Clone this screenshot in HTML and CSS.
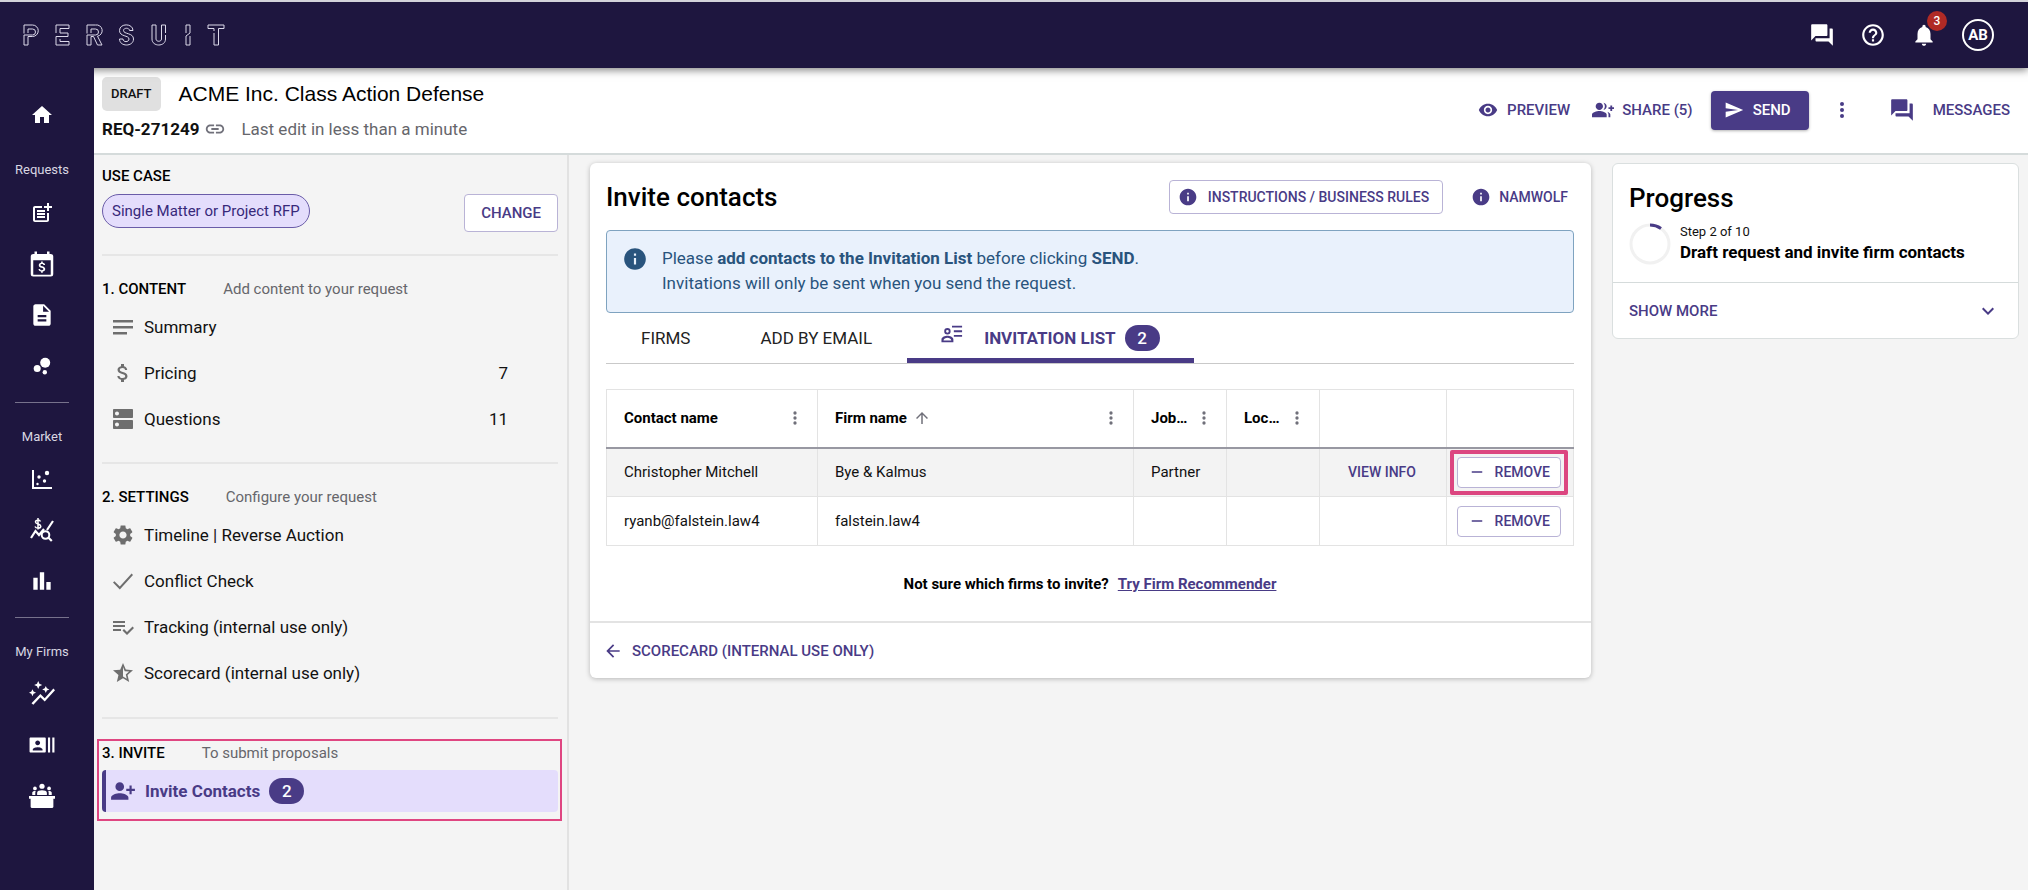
FILE: index.html
```html
<!DOCTYPE html>
<html lang="en">
<head>
<meta charset="utf-8">
<title>ACME Inc. Class Action Defense</title>
<link rel="stylesheet" href="styles.css">
</head>
<body>
<svg class="sprite" aria-hidden="true">
  <symbol id="i-forum" viewBox="0 0 24 24"><path d="M21 6h-2v9H6v2c0 .55.45 1 1 1h11l4 4V7c0-.55-.45-1-1-1zm-4 6V3c0-.55-.45-1-1-1H3c-.55 0-1 .45-1 1v14l4-4h10c.55 0 1-.45 1-1z"/></symbol>
  <symbol id="i-help" viewBox="0 0 24 24"><path d="M11 18h2v-2h-2v2zm1-16C6.48 2 2 6.48 2 12s4.480 10 10 10 10-4.480 10-10S17.520 2 12 2zm0 18c-4.410 0-8-3.590-8-8s3.590-8 8-8 8 3.590 8 8-3.590 8-8 8zm0-14c-2.210 0-4 1.790-4 4h2c0-1.100.9-2 2-2s2 .9 2 2c0 2-3 1.750-3 5h2c0-2.250 3-2.500 3-5 0-2.210-1.790-4-4-4z"/></symbol>
  <symbol id="i-bell" viewBox="0 0 24 24"><path d="M12 22c1.100 0 2-.9 2-2h-4c0 1.100.89 2 2 2zm6-6v-5c0-3.070-1.640-5.640-4.500-6.320V4c0-.83-.67-1.500-1.500-1.500s-1.500.67-1.500 1.500v.68C7.630 5.360 6 7.920 6 11v5l-2 2v1h16v-1l-2-2z"/></symbol>
  <symbol id="i-home" viewBox="0 0 24 24"><path d="M10 20v-6h4v6h5v-8h3L12 3 2 12h3v8z"/></symbol>
  <symbol id="i-post" viewBox="0 0 24 24"><path d="M17 19.220H5V7h7V5H5c-1.100 0-2 .9-2 2v12c0 1.100.9 2 2 2h12c1.100 0 2-.9 2-2v-7h-2v7.220z"/><path d="M19 2h-2v3h-3v2h3v3h2V7h3V5h-3V2zM7 9h8v2H7zM7 12v2h8v-2zM7 15h8v2H7z"/></symbol>
  <symbol id="i-calendar" viewBox="0 0 24 24"><path d="M19 4h-1V2h-2v2H8V2H6v2H5a2 2 0 0 0-2 2v14a2 2 0 0 0 2 2h14a2 2 0 0 0 2-2V6a2 2 0 0 0-2-2zm0 16.500H5V9h14v11.500z"/><path d="M12.600 11v-1h-1.300v1c-1 .2-1.900.8-1.900 1.900 0 1.200 1 1.700 2.200 2 1.100.3 1.500.6 1.500 1.100 0 .4-.3.9-1.300.9s-1.300-.4-1.300-1H9.200c.1 1.200.9 1.900 2.100 2.100v1h1.300v-1c1.100-.2 2-.8 2-2 0-1.500-1.300-2-2.400-2.300-1.100-.3-1.400-.5-1.400-1s.4-.8 1.200-.8 1.100.4 1.100.9h1.400c0-1-.7-1.600-1.900-1.800z"/></symbol>
  <symbol id="i-doc" viewBox="0 0 24 24"><path d="M14 2H6c-1.100 0-2 .9-2 2v16c0 1.100.89 2 2 2h12c1.100 0 2-.9 2-2V8l-6-6zm2 16H8v-2h8v2zm0-4H8v-2h8v2zm-3-5V3.500L18.500 9H13z"/></symbol>
  <symbol id="i-bubble" viewBox="0 0 24 24"><circle cx="7.200" cy="14.400" r="3.500"/><circle cx="14.800" cy="18.300" r="2.200"/><circle cx="15.200" cy="8.800" r="5"/></symbol>
  <symbol id="i-scatter" viewBox="0 0 24 24"><path d="M2 3h2v17h18v2H2z"/><circle cx="9" cy="10" r="1.700"/><circle cx="17" cy="6" r="2.200"/><circle cx="14.500" cy="14" r="1.700"/><circle cx="7.500" cy="17" r="1.200"/></symbol>
  <symbol id="i-query" viewBox="0 0 24 24"><path fill="none" stroke="currentColor" stroke-width="2.200" d="M1 20l4.500-7 3.500 4 5-6M17 12l6-9"/><circle cx="15.500" cy="17" r="3.800" fill="none" stroke="currentColor" stroke-width="2"/><path fill="none" stroke="currentColor" stroke-width="2.200" d="M18.300 19.500l3.500 3.500"/><path fill="none" stroke="currentColor" stroke-width="1.500" d="M10.500 3.500C9.500 1.500 5.500 1.700 5.500 4S10.800 5.800 10.800 8.200 6 10.800 5 8.500M8 0v11.500"/></symbol>
  <symbol id="i-bars" viewBox="0 0 24 24"><path d="M4 9h4v11H4zM16 13h4v7h-4zM10 4h4v16h-4z"/></symbol>
  <symbol id="i-insights" viewBox="0 0 24 24"><path d="M22.500 7L24 8.500l-9.500 10.500-4-4L4 22l-1.700-1.500 8.200-8.500 4 4z"/><path d="M8.500 0l1.100 2.600 2.600 1.100-2.600 1.100-1.100 2.600-1.100-2.600-2.600-1.100 2.600-1.100zM3.200 7.500l1 2.300 2.300 1-2.300 1-1 2.300-1-2.300-2.300-1 2.300-1zM15.500 4.500l1 2.300 2.300 1-2.300 1-1 2.300-1-2.300-2.300-1 2.300-1z"/></symbol>
  <symbol id="i-contacts" viewBox="0 0 24 24"><path d="M21.500 5v14h2V5h-2zm-4 14h2V5h-2v14zM14.500 5H1.500c-.55 0-1 .45-1 1v12c0 .55.45 1 1 1h13c.55 0 1-.45 1-1V6c0-.55-.45-1-1-1zM8 7.750c1.240 0 2.250 1.010 2.250 2.250S9.240 12.250 8 12.250 5.750 11.240 5.750 10 6.760 7.750 8 7.750zM12.500 17h-9v-.75c0-1.500 3-2.250 4.500-2.250s4.500.75 4.500 2.250V17z"/></symbol>
  <symbol id="i-panel" viewBox="0 0 24 24"><circle cx="12" cy="3" r="2.400"/><circle cx="5.500" cy="5" r="1.700"/><circle cx="18.500" cy="5" r="1.700"/><path d="M7.500 11V9c0-3 9-3 9 0v2zM3 11V9c0-1.200 1.500-1.800 3.300-1.600C5.800 8 5.800 9 5.800 11zM21 11V9c0-1.200-1.500-1.800-3.300-1.600.5.600.5 1.600.5 3.600zM0 12h24v2.500h-1.500V22a1 1 0 0 1-1 1h-19a1 1 0 0 1-1-1v-7.500H0z"/></symbol>
  <symbol id="i-link" viewBox="0 0 24 24"><path d="M3.900 12c0-1.710 1.390-3.100 3.100-3.100h4V7H7c-2.760 0-5 2.240-5 5s2.240 5 5 5h4v-1.900H7c-1.710 0-3.100-1.390-3.100-3.100zM8 13h8v-2H8v2zm9-6h-4v1.900h4c1.710 0 3.100 1.390 3.100 3.100s-1.390 3.100-3.100 3.100h-4V17h4c2.760 0 5-2.240 5-5s-2.240-5-5-5z"/></symbol>
  <symbol id="i-eye" viewBox="0 0 24 24"><path d="M12 4.500C7 4.500 2.730 7.610 1 12c1.730 4.390 6 7.500 11 7.500s9.270-3.110 11-7.500c-1.730-4.390-6-7.500-11-7.500zM12 17c-2.760 0-5-2.240-5-5s2.240-5 5-5 5 2.240 5 5-2.240 5-5 5zm0-8c-1.660 0-3 1.340-3 3s1.340 3 3 3 3-1.340 3-3-1.340-3-3-3z"/></symbol>
  <symbol id="i-share" viewBox="0 0 24 24"><path d="M22 9V7h-2v2h-2v2h2v2h2v-2h2V9zM8 12c2.210 0 4-1.790 4-4s-1.790-4-4-4-4 1.790-4 4 1.790 4 4 4zm0 1c-2.670 0-8 1.340-8 4v3h16v-3c0-2.660-5.330-4-8-4zm4.510-8.950C13.430 5.110 14 6.490 14 8s-.57 2.890-1.490 3.950C14.470 11.700 16 10.040 16 8s-1.530-3.700-3.490-3.950zm4.020 9.780C17.420 14.660 18 15.700 18 17v3h2v-3c0-1.450-1.590-2.510-3.470-3.170z"/></symbol>
  <symbol id="i-send" viewBox="0 0 24 24"><path d="M2.010 21L23 12 2.010 3 2 10l15 2-15 2z"/></symbol>
  <symbol id="i-dots" viewBox="0 0 24 24"><circle cx="12" cy="6" r="2"/><circle cx="12" cy="12" r="2"/><circle cx="12" cy="18" r="2"/></symbol>
  <symbol id="i-lines" viewBox="0 0 24 24"><path d="M2 5h20v2.500H2zM2 11h20v2.500H2zM2 17h14v2.500H2z"/></symbol>
  <symbol id="i-dollar" viewBox="0 0 24 24"><path d="M11.800 10.900c-2.270-.59-3-1.200-3-2.150 0-1.090 1.010-1.850 2.700-1.850 1.780 0 2.440.85 2.500 2.100h2.210c-.07-1.720-1.120-3.300-3.210-3.810V3h-3v2.160c-1.940.42-3.500 1.680-3.500 3.610 0 2.310 1.910 3.460 4.700 4.130 2.500.6 3 1.480 3 2.410 0 .69-.49 1.790-2.700 1.790-2.060 0-2.870-.92-2.980-2.100h-2.200c.12 2.190 1.760 3.420 3.680 3.830V21h3v-2.150c1.950-.37 3.500-1.500 3.500-3.550 0-2.840-2.430-3.810-4.700-4.400z"/></symbol>
  <symbol id="i-dns" viewBox="0 0 24 24"><path d="M21 13H3c-.55 0-1 .45-1 1v7c0 .55.45 1 1 1h18c.55 0 1-.45 1-1v-7c0-.55-.45-1-1-1zM6 19.500c-1.100 0-2-.9-2-2s.9-2 2-2 2 .9 2 2-.9 2-2 2zM21 2H3c-.55 0-1 .45-1 1v7c0 .55.45 1 1 1h18c.55 0 1-.45 1-1V3c0-.55-.45-1-1-1zM6 8.500c-1.100 0-2-.9-2-2s.9-2 2-2 2 .9 2 2-.9 2-2 2z"/></symbol>
  <symbol id="i-gear" viewBox="0 0 24 24"><path d="M19.140 12.940c.04-.3.060-.61.060-.94 0-.32-.02-.64-.07-.94l2.030-1.580c.18-.14.23-.41.12-.61l-1.920-3.320c-.12-.22-.37-.29-.59-.22l-2.390.96c-.5-.38-1.030-.7-1.620-.94l-.36-2.540c-.04-.24-.24-.41-.48-.41h-3.840c-.24 0-.43.17-.47.41l-.36 2.540c-.59.24-1.130.57-1.620.94l-2.390-.96c-.22-.08-.47 0-.59.22L2.740 8.870c-.12.21-.08.47.12.61l2.030 1.580c-.05.3-.09.63-.09.94s.02.64.07.94l-2.030 1.580c-.18.14-.23.41-.12.61l1.920 3.320c.12.22.37.29.59.22l2.390-.96c.5.38 1.030.7 1.620.94l.36 2.540c.05.24.24.41.48.41h3.840c.24 0 .44-.17.47-.41l.36-2.540c.59-.24 1.130-.56 1.620-.94l2.390.96c.22.08.47 0 .59-.22l1.920-3.320c.12-.22.07-.47-.12-.61l-2.010-1.580zM12 15.600c-1.980 0-3.600-1.620-3.600-3.600s1.620-3.600 3.600-3.600 3.600 1.620 3.600 3.600-1.620 3.600-3.600 3.600z"/></symbol>
  <symbol id="i-check" viewBox="0 0 24 24"><path d="M8.800 17.600L3.400 12.200 2 13.600 8.800 20.400 22 6l-1.400-1.400z"/></symbol>
  <symbol id="i-track" viewBox="0 0 24 24"><path d="M14 10H2v2h12v-2zm0-4H2v2h12V6zM2 16h8v-2H2v2zm19.500-4.500L23 13l-6.990 7-4.510-4.500L13 14l3.010 3 5.490-5.500z"/></symbol>
  <symbol id="i-star" viewBox="0 0 24 24"><path d="M22 9.240l-7.190-.62L12 2 9.190 8.630 2 9.240l5.460 4.730L5.820 21 12 17.270 18.180 21l-1.630-7.030L22 9.240zM12 15.400V6.100l1.710 4.040 4.380.38-3.320 2.880 1 4.280L12 15.400z"/></symbol>
  <symbol id="i-invite" viewBox="0 0 24 24"><path d="M13 8c0-2.210-1.790-4-4-4S5 5.790 5 8s1.790 4 4 4 4-1.790 4-4zm2 2v2h3v3h2v-3h3v-2h-3V7h-2v3h-3zM1 18v2h16v-2c0-2.660-5.330-4-8-4s-8 1.340-8 4z"/></symbol>
  <symbol id="i-info" viewBox="0 0 24 24"><path d="M12 2C6.480 2 2 6.480 2 12s4.480 10 10 10 10-4.480 10-10S17.520 2 12 2zm1 15h-2v-6h2v6zm0-8h-2V7h2v2z"/></symbol>
  <symbol id="i-list" viewBox="0 0 24 24"><path d="M12 3h11v2H12zM14 8h9v2h-9zM14 13h9v2h-9z"/><path d="M7 5.500a3.500 3.500 0 1 0 0 7 3.500 3.500 0 0 0 0-7zm0 2a1.500 1.500 0 1 1 0 3 1.500 1.500 0 0 1 0-3zM7 14c-2.300 0-6.500 1.200-6.500 4v3h13v-3c0-2.800-4.200-4-6.500-4zm4.300 5H2.700c.3-1.600 2.300-2.800 4.300-2.800s4 1.200 4.300 2.800z"/></symbol>
  <symbol id="i-up" viewBox="0 0 24 24"><path d="M4 12l1.410 1.410L11 7.830V20h2V7.830l5.580 5.590L20 12l-8-8z"/></symbol>
  <symbol id="i-left" viewBox="0 0 24 24"><path d="M20 11H7.830l5.590-5.590L12 4l-8 8 8 8 1.410-1.410L7.830 13H20z"/></symbol>
  <symbol id="i-minus" viewBox="0 0 24 24"><path d="M5 11h14v2H5z"/></symbol>
  <symbol id="i-chevron" viewBox="0 0 24 24"><path d="M16.590 8.590L12 13.170 7.410 8.590 6 10l6 6 6-6z"/></symbol>
</svg>

<header class="topbar">
  <svg class="logo" viewBox="0 0 206 22" role="img" aria-label="PERSUIT">
    <path d="M1 9.500V1h8.500a5.500 5.500 0 0 1 0 11.500H5V21H1V11h8.500a3 3 0 0 0 0-6H5v4"/>
    <path d="M33 9V1h13v3.500H37V9h8v3.500H33V21h13v-3.500h-9V15"/>
    <path d="M64 9.500V1h8.500a5.500 5.500 0 0 1 2 11.200L79 21h-4.500l-4-8.500H68V21h-4V11h8.500a3 3 0 0 0 0-6H68v4"/>
    <path d="M110 6.500c0-7.500-13.500-7.500-13.500 0 0 6.500 9.500 4.500 9.500 8.500 0 3.500-6 3.500-6 0h-3.500c0 8 14 8 14 0 0-6.500-10-4.500-10-8.500 0-3 6-3 6 0z"/>
    <path d="M142.500 9V1h-4v14c0 3-5.500 3-5.500 0V1h-4v14c0 8 13.500 8 13.500 0v-4"/>
    <path d="M163 9V1h4v8l-4 3v9h4v-9"/>
    <path d="M191 7V4.500h-6V1h16v3.500h-5.500V21H191V9"/>
  </svg>
  <nav class="top-icons" aria-label="Account">
    <button class="icon-btn" aria-label="Messages"><svg class="i26"><use href="#i-forum"/></svg></button>
    <button class="icon-btn" aria-label="Help"><svg class="i26"><use href="#i-help"/></svg></button>
    <button class="icon-btn" aria-label="Notifications"><svg class="i26"><use href="#i-bell"/></svg><span class="count">3</span></button>
    <button class="avatar">AB</button>
  </nav>
</header>

<div class="shell">
  <nav class="rail" aria-label="Main">
    <a href="#" aria-label="Home"><svg class="i24"><use href="#i-home"/></svg></a>
    <span class="rail-label">Requests</span>
    <a href="#" aria-label="New request"><svg class="i24"><use href="#i-post"/></svg></a>
    <a href="#" aria-label="Rates"><svg class="i30"><use href="#i-calendar"/></svg></a>
    <a href="#" aria-label="Documents"><svg class="i26"><use href="#i-doc"/></svg></a>
    <a href="#" aria-label="Bubbles"><svg class="i24"><use href="#i-bubble"/></svg></a>
    <hr>
    <span class="rail-label">Market</span>
    <a href="#" aria-label="Scatter"><svg class="i24"><use href="#i-scatter"/></svg></a>
    <a href="#" aria-label="Price search"><svg class="i24"><use href="#i-query"/></svg></a>
    <a href="#" aria-label="Reports"><svg class="i26"><use href="#i-bars"/></svg></a>
    <hr>
    <span class="rail-label">My Firms</span>
    <a href="#" aria-label="Insights"><svg class="i26"><use href="#i-insights"/></svg></a>
    <a href="#" aria-label="Contacts"><svg class="i26"><use href="#i-contacts"/></svg></a>
    <a href="#" aria-label="Panels"><svg class="i26"><use href="#i-panel"/></svg></a>
  </nav>

  <div class="page">
    <div class="request-bar">
      <div class="request-info">
        <div class="title-row"><span class="draft">DRAFT</span><h1>ACME Inc. Class Action Defense</h1></div>
        <div class="ref-row"><strong>REQ-271249</strong><svg class="i22 gray"><use href="#i-link"/></svg><span class="muted">Last edit in less than a minute</span></div>
      </div>
      <div class="actions">
        <button class="text-btn"><svg class="i20"><use href="#i-eye"/></svg>PREVIEW</button>
        <button class="text-btn share"><svg class="i22"><use href="#i-share"/></svg>SHARE (5)</button>
        <button class="send"><svg class="i20"><use href="#i-send"/></svg>SEND</button>
        <button class="text-btn more" aria-label="More"><svg class="i24"><use href="#i-dots"/></svg></button>
        <button class="text-btn messages"><svg class="i26"><use href="#i-forum"/></svg>MESSAGES</button>
      </div>
    </div>

    <div class="body">
      <aside class="steps">
        <section class="use-case">
          <h2>USE CASE</h2>
          <div class="use-row"><span class="chip">Single Matter or Project RFP</span><button class="outline change">CHANGE</button></div>
        </section>
        <section>
          <div class="sec-head"><h2>1. CONTENT</h2><span>Add content to your request</span></div>
          <a class="step" href="#"><svg class="i24"><use href="#i-lines"/></svg>Summary</a>
          <a class="step" href="#"><svg class="i24"><use href="#i-dollar"/></svg>Pricing<span class="num">7</span></a>
          <a class="step" href="#"><svg class="i24"><use href="#i-dns"/></svg>Questions<span class="num">11</span></a>
        </section>
        <section class="settings">
          <div class="sec-head"><h2>2. SETTINGS</h2><span>Configure your request</span></div>
          <a class="step" href="#"><svg class="i24"><use href="#i-gear"/></svg>Timeline | Reverse Auction</a>
          <a class="step" href="#"><svg class="i24"><use href="#i-check"/></svg>Conflict Check</a>
          <a class="step" href="#"><svg class="i24"><use href="#i-track"/></svg>Tracking (internal use only)</a>
          <a class="step" href="#"><svg class="i24"><use href="#i-star"/></svg>Scorecard (internal use only)</a>
        </section>
        <section class="invite">
          <div class="sec-head"><h2>3. INVITE</h2><span>To submit proposals</span></div>
          <a class="step active" href="#"><svg class="i26"><use href="#i-invite"/></svg>Invite Contacts<span class="pill">2</span></a>
        </section>
      </aside>

      <main class="card">
        <div class="card-body">
          <div class="card-head">
            <h2>Invite contacts</h2>
            <button class="outline rules"><svg class="i20"><use href="#i-info"/></svg>INSTRUCTIONS / BUSINESS RULES</button>
            <button class="text-btn namwolf"><svg class="i20"><use href="#i-info"/></svg>NAMWOLF</button>
          </div>
          <div class="alert" role="note">
            <svg class="i26"><use href="#i-info"/></svg>
            <p>Please <b>add contacts to the Invitation List</b> before clicking <b>SEND</b>.<br>Invitations will only be sent when you send the request.</p>
          </div>
          <div class="tabs" role="tablist">
            <button class="tab" role="tab">FIRMS</button>
            <button class="tab" role="tab">ADD BY EMAIL</button>
            <button class="tab on" role="tab" aria-selected="true"><svg class="i22"><use href="#i-list"/></svg>INVITATION LIST<span class="pill">2</span></button>
          </div>
          <table>
            <colgroup><col class="c-name"><col><col class="c-small"><col class="c-small"><col class="c-action"><col class="c-action"></colgroup>
            <thead>
              <tr>
                <th><div class="th">Contact name<svg class="i20 gray"><use href="#i-dots"/></svg></div></th>
                <th><div class="th"><span>Firm name</span><svg class="i18 gray sort"><use href="#i-up"/></svg><svg class="i20 gray"><use href="#i-dots"/></svg></div></th>
                <th><div class="th">Job…<svg class="i20 gray"><use href="#i-dots"/></svg></div></th>
                <th><div class="th">Loc…<svg class="i20 gray"><use href="#i-dots"/></svg></div></th>
                <th></th>
                <th></th>
              </tr>
            </thead>
            <tbody>
              <tr class="hover">
                <td>Christopher Mitchell</td><td>Bye &amp; Kalmus</td><td>Partner</td><td></td>
                <td class="center"><button class="text-btn view">VIEW INFO</button></td>
                <td class="center"><div class="mark"><button class="outline remove"><svg class="i18"><use href="#i-minus"/></svg>REMOVE</button></div></td>
              </tr>
              <tr>
                <td>ryanb@falstein.law4</td><td>falstein.law4</td><td></td><td></td><td></td>
                <td class="center"><button class="outline remove"><svg class="i18"><use href="#i-minus"/></svg>REMOVE</button></td>
              </tr>
            </tbody>
          </table>
          <p class="hint">Not sure which firms to invite?<a href="#">Try Firm Recommender</a></p>
        </div>
        <div class="card-foot"><button class="text-btn"><svg class="i20"><use href="#i-left"/></svg>SCORECARD (INTERNAL USE ONLY)</button></div>
      </main>

      <aside class="progress">
        <div class="progress-top">
          <h2>Progress</h2>
          <div class="progress-row">
            <svg class="ring" viewBox="0 0 42 42"><circle cx="21" cy="21" r="19"/><path d="M21 2a19 19 0 0 1 11 3.500"/></svg>
            <div class="progress-text"><div class="step-of">Step 2 of 10</div><strong>Draft request and invite firm contacts</strong></div>
          </div>
        </div>
        <button class="show-more">SHOW MORE<svg class="i24"><use href="#i-chevron"/></svg></button>
      </aside>
    </div>
  </div>
</div>
</body>
</html>
```
FILE: styles.css
```css
* { box-sizing: border-box; }
body {
  margin: 0;
  min-height: 100vh;
  display: flex;
  flex-direction: column;
  background: #f4f4f4;
  color: #111;
  font: 16px/24px Roboto, sans-serif;
}
h1, h2, p { margin: 0; font-weight: 500; }
button { font: inherit; border: 0; padding: 0; background: none; color: inherit; cursor: pointer; }
a { color: inherit; text-decoration: none; }
svg { display: block; flex: none; fill: currentColor; }
.sprite { position: absolute; width: 0; height: 0; }
.i18 { width: 18px; height: 18px; }
.i20 { width: 20px; height: 20px; }
.i22 { width: 22px; height: 22px; }
.i24 { width: 24px; height: 24px; }
.i26 { width: 26px; height: 26px; }
.i30 { width: 30px; height: 30px; }
.gray { color: #70707a; }
.muted { color: #66666b; }

.topbar {
  height: 68px;
  border-top: 2px solid #d3d3da;
  padding: 0 34px 0 23px;
  display: flex;
  align-items: center;
  justify-content: space-between;
  background: #1e163f;
  color: #fff;
  box-shadow: 0 2px 8px rgba(0, 0, 0, .5);
  z-index: 1;
}
.logo { width: 206px; height: 22px; fill: none; stroke: #dcd9ea; stroke-width: 1; }
.top-icons { display: flex; align-items: center; gap: 25px; }
.icon-btn { position: relative; }
.count {
  position: absolute;
  right: -10px;
  top: -11px;
  width: 20px;
  height: 20px;
  border-radius: 50%;
  background: #b02a25;
  font-size: 12px;
  font-weight: 500;
  line-height: 20px;
}
.avatar { width: 32px; height: 32px; border: 2px solid #fff; border-radius: 50%; font-size: 15px; font-weight: 700; line-height: 28px; }

.shell { flex: 1; display: flex; }
.rail {
  width: 94px;
  flex: none;
  padding: 21px 10px 0 0;
  display: flex;
  flex-direction: column;
  align-items: center;
  background: #1e163f;
  color: #fff;
  z-index: 2;
}
.rail a { height: 51px; display: grid; place-items: center; }
.rail-label { height: 47px; padding-top: 18px; font-size: 13px; color: #d9d7e2; }
.rail hr { width: 54px; margin: 11px 0 0; border: 0; border-top: 1px solid #77728c; }
.rail hr + .rail-label { height: 50px; padding-top: 22px; }

.page { flex: 1; min-width: 0; display: flex; flex-direction: column; }
.request-bar {
  padding: 9px 18px 6px 8px;
  display: flex;
  justify-content: space-between;
  align-items: flex-start;
  background: #fff;
  border-bottom: 2px solid #d5dbdb;
}
.title-row { height: 34px; display: flex; align-items: center; gap: 18px; }
.draft { padding: 5px 9px; border-radius: 5px; background: #e0e0e0; font-size: 13px; font-weight: 500; }
h1 { font: 400 21px/28px "Liberation Sans", Arial, sans-serif; color: #000; }
.ref-row { height: 36px; display: flex; align-items: center; gap: 5px; font-size: 17px; }
.ref-row .muted { margin-left: 10px; }
.actions { height: 66px; display: flex; align-items: center; }
.text-btn { display: flex; align-items: center; gap: 9px; color: #493b86; font-size: 15px; font-weight: 500; }
.share { margin-left: 22px; gap: 8px; }
.send {
  margin-left: 18px;
  height: 39px;
  padding: 0 18px 0 13px;
  display: flex;
  align-items: center;
  gap: 9px;
  border-radius: 4px;
  background: #493b86;
  color: #fff;
  font-size: 15px;
  font-weight: 500;
  box-shadow: 0 1px 3px rgba(0, 0, 0, .3);
}
.more { margin-left: 21px; }
.messages { margin-left: 35px; gap: 18px; }

.body { flex: 1; display: flex; align-items: flex-start; padding-right: 9px; }
.steps { width: 475px; flex: none; align-self: stretch; padding: 0 9px 0 8px; border-right: 2px solid #e2e2e2; }
.steps h2 { font-size: 15px; color: #000; }
.steps section { border-bottom: 2px solid #e6e6e6; height: 208px; padding-top: 21px; }
.steps .use-case { height: 101px; padding-top: 9px; }
.use-row { display: flex; align-items: flex-start; justify-content: space-between; margin-top: 6px; }
.chip {
  height: 34px;
  padding: 0 9px;
  border: 1px solid #6a5ca8;
  border-radius: 17px;
  background: #e4ddfc;
  color: #37297a;
  font-size: 15px;
  line-height: 32px;
}
.outline { border: 1px solid #b9b3d6; border-radius: 4px; background: #fff; color: #493b86; font-weight: 500; display: flex; align-items: center; }
.change { height: 38px; padding: 0 16px; font-size: 15px; }
.sec-head { height: 27px; display: flex; gap: 37px; font-size: 15px; color: #66666b; }
.step { height: 46px; display: flex; align-items: center; gap: 9px; padding-left: 9px; font-size: 17px; color: #111; }
.step svg { color: #6e6e6e; }
.num { margin-left: auto; margin-right: 50px; }
.steps .settings { height: 255px; }
.steps .invite {
  height: 82px;
  border: 2px solid #df4681;
  margin: 20px -4px 0 -5px;
  padding: 0 2px 0 3px;
}
.invite .sec-head { height: 29px; }
.invite .step { height: 42px; }
.step.active { border-left: 4px solid #493b86; border-radius: 4px; background: #e4ddfc; color: #493b86; font-weight: 700; padding-left: 4px; gap: 9px; }
.step.active svg { color: #493b86; }
.pill { height: 26px; min-width: 35px; border-radius: 13px; background: #493b86; color: #fff; text-align: center; font-weight: 500; line-height: 26px; }

.card {
  flex: 1;
  min-width: 0;
  margin: 8px 21px 0;
  border-radius: 6px;
  background: #fff;
  box-shadow: 0 1px 5px rgba(0, 0, 0, .25);
}
.card-body { padding: 16px 17px 25px 16px; border-bottom: 2px solid #e3e3e3; }
.card-head { display: flex; align-items: center; height: 35px; padding-right: 6px; }
.card-head h2, .progress h2 { font-size: 26px; line-height: 32px; color: #000; }
.card-head h2 { margin-right: auto; }
.rules { height: 34px; padding: 0 13px 0 8px; gap: 10px; font-size: 14px; }
.namwolf { margin-left: 28px; font-size: 14px; gap: 8px; }
.alert {
  margin-top: 16px;
  padding: 15px 18px 16px 15px;
  display: flex;
  gap: 14px;
  border: 1px solid #7fa3c0;
  border-radius: 4px;
  background: #e9f1fc;
  color: #29547d;
  font-size: 17px;
  line-height: 25px;
}
.alert p { font-weight: 400; }
.alert b { font-weight: 700; }
.tabs { display: flex; height: 51px; border-bottom: 1px solid #c9c9c9; font-size: 17px; }
.tab { padding: 0 35px; color: #222; }
.tab.on { display: flex; align-items: center; gap: 9px; padding: 0 34px; color: #493b86; font-weight: 700; box-shadow: inset 0 -5px 0 #493b86; }
.tab.on svg { margin: -8px 12px 0 0; }
table { width: 100%; margin-top: 25px; table-layout: fixed; border-collapse: collapse; font-size: 15px; line-height: 20px; }
.c-name { width: 211px; }
.c-small { width: 93px; }
.c-action { width: 127px; }
th, td { border: 1px solid #e3e3e3; padding: 0 17px; height: 49px; text-align: left; color: #111; }
th { height: 58px; padding-right: 12px; border-bottom: 2px solid #9898a2; font-weight: 700; color: #000; }
.th { display: flex; align-items: center; }
.th svg:last-child { margin-left: auto; }
.sort { margin-left: 6px; }
.hover { background: #f3f3f3; }
td.center { padding: 0 9px 0 7px; }
.view { margin: 0 auto; font-size: 14px; }
.mark { margin: 0 -4px; border: 4px solid #dc4680; border-radius: 2px; padding: 3px 2px; }
.remove { width: 104px; height: 31px; margin: 0 auto; padding: 0 10px; justify-content: space-between; font-size: 14px; }
.hint { margin-top: 26px; text-align: center; font-size: 15px; font-weight: 700; color: #000; }
.hint a { margin-left: 9px; color: #493b86; text-decoration: underline; }
.card-foot { height: 55px; display: flex; align-items: center; padding: 0 13px; }

.progress { width: 407px; flex: none; margin-top: 8px; border: 1px solid #dadfdf; border-radius: 6px; background: #fff; }
.progress-top { padding: 18px 16px 16px; border-bottom: 1px solid #d5dbdb; }
.progress-row { display: flex; align-items: center; gap: 9px; margin-top: 8px; }
.progress-text { padding-bottom: 4px; }
.ring { width: 42px; height: 42px; fill: none; stroke: #f1f1f1; stroke-width: 3; }
.ring path { stroke: #493b86; }
.step-of { font-size: 13px; line-height: 20px; }
.progress strong { display: block; font-size: 17px; line-height: 20px; color: #000; }
.show-more { width: 100%; height: 55px; padding: 0 18px 0 16px; display: flex; align-items: center; justify-content: space-between; color: #493b86; font-size: 15px; font-weight: 500; }
```
